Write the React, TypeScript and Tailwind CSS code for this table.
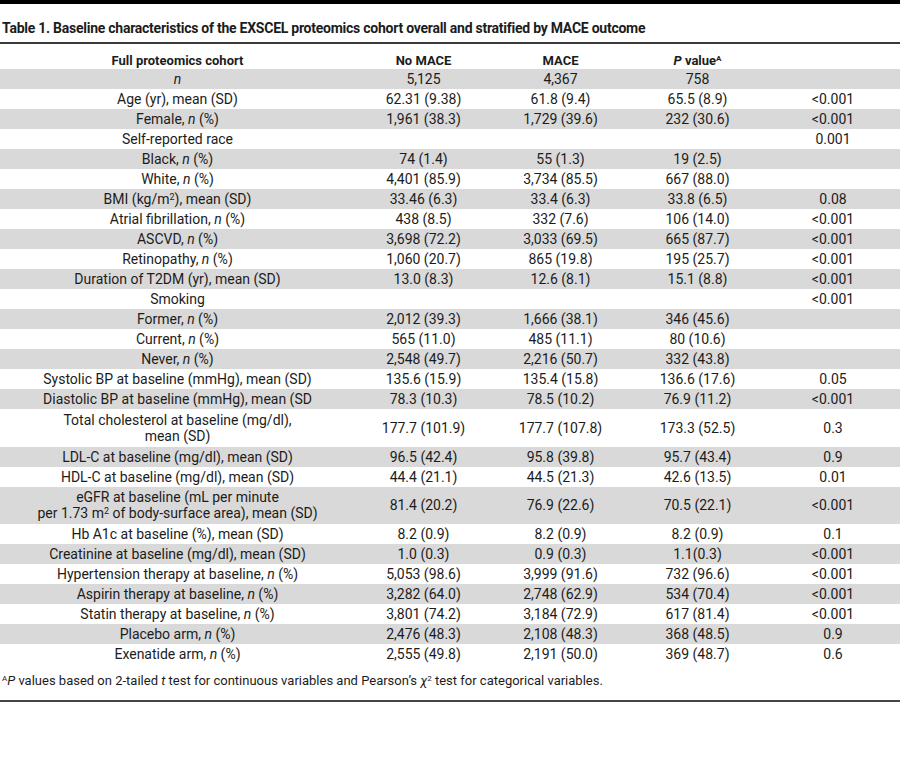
import React from "react";

type Row = {
  label: React.ReactNode;
  noMace: string;
  mace: string;
  pv: string;
  last: string;
  tall?: boolean;
};

const N = () => <i>n</i>;

const rows: Row[] = [
  { label: <N />, noMace: "5,125", mace: "4,367", pv: "758", last: "" },
  { label: "Age (yr), mean (SD)", noMace: "62.31 (9.38)", mace: "61.8 (9.4)", pv: "65.5 (8.9)", last: "<0.001" },
  { label: <>Female, <N /> (%)</>, noMace: "1,961 (38.3)", mace: "1,729 (39.6)", pv: "232 (30.6)", last: "<0.001" },
  { label: "Self-reported race", noMace: "", mace: "", pv: "", last: "0.001" },
  { label: <>Black, <N /> (%)</>, noMace: "74 (1.4)", mace: "55 (1.3)", pv: "19 (2.5)", last: "" },
  { label: <>White, <N /> (%)</>, noMace: "4,401 (85.9)", mace: "3,734 (85.5)", pv: "667 (88.0)", last: "" },
  {
    label: <>BMI (kg/m<sup className="text-[9px]">2</sup>), mean (SD)</>,
    noMace: "33.46 (6.3)", mace: "33.4 (6.3)", pv: "33.8 (6.5)", last: "0.08",
  },
  { label: <>Atrial fibrillation, <N /> (%)</>, noMace: "438 (8.5)", mace: "332 (7.6)", pv: "106 (14.0)", last: "<0.001" },
  { label: <>ASCVD, <N /> (%)</>, noMace: "3,698 (72.2)", mace: "3,033 (69.5)", pv: "665 (87.7)", last: "<0.001" },
  { label: <>Retinopathy, <N /> (%)</>, noMace: "1,060 (20.7)", mace: "865 (19.8)", pv: "195 (25.7)", last: "<0.001" },
  { label: "Duration of T2DM (yr), mean (SD)", noMace: "13.0 (8.3)", mace: "12.6 (8.1)", pv: "15.1 (8.8)", last: "<0.001" },
  { label: "Smoking", noMace: "", mace: "", pv: "", last: "<0.001" },
  { label: <>Former, <N /> (%)</>, noMace: "2,012 (39.3)", mace: "1,666 (38.1)", pv: "346 (45.6)", last: "" },
  { label: <>Current, <N /> (%)</>, noMace: "565 (11.0)", mace: "485 (11.1)", pv: "80 (10.6)", last: "" },
  { label: <>Never, <N /> (%)</>, noMace: "2,548 (49.7)", mace: "2,216 (50.7)", pv: "332 (43.8)", last: "" },
  { label: "Systolic BP at baseline (mmHg), mean (SD)", noMace: "135.6 (15.9)", mace: "135.4 (15.8)", pv: "136.6 (17.6)", last: "0.05" },
  { label: "Diastolic BP at baseline (mmHg), mean (SD", noMace: "78.3 (10.3)", mace: "78.5 (10.2)", pv: "76.9 (11.2)", last: "<0.001" },
  {
    label: <>Total cholesterol at baseline (mg/dl),<br />mean (SD)</>,
    noMace: "177.7 (101.9)", mace: "177.7 (107.8)", pv: "173.3 (52.5)", last: "0.3", tall: true,
  },
  { label: "LDL-C at baseline (mg/dl), mean (SD)", noMace: "96.5 (42.4)", mace: "95.8 (39.8)", pv: "95.7 (43.4)", last: "0.9" },
  { label: "HDL-C at baseline (mg/dl), mean (SD)", noMace: "44.4 (21.1)", mace: "44.5 (21.3)", pv: "42.6 (13.5)", last: "0.01" },
  {
    label: (
      <>
        eGFR at baseline (mL per minute
        <br />
        per 1.73 m<sup className="text-[9px]">2</sup> of body-surface area), mean (SD)
      </>
    ),
    noMace: "81.4 (20.2)", mace: "76.9 (22.6)", pv: "70.5 (22.1)", last: "<0.001", tall: true,
  },
  { label: "Hb A1c at baseline (%), mean (SD)", noMace: "8.2 (0.9)", mace: "8.2 (0.9)", pv: "8.2 (0.9)", last: "0.1" },
  { label: "Creatinine at baseline (mg/dl), mean (SD)", noMace: "1.0 (0.3)", mace: "0.9 (0.3)", pv: "1.1(0.3)", last: "<0.001" },
  { label: <>Hypertension therapy at baseline, <N /> (%)</>, noMace: "5,053 (98.6)", mace: "3,999 (91.6)", pv: "732 (96.6)", last: "<0.001" },
  { label: <>Aspirin therapy at baseline, <N /> (%)</>, noMace: "3,282 (64.0)", mace: "2,748 (62.9)", pv: "534 (70.4)", last: "<0.001" },
  { label: <>Statin therapy at baseline, <N /> (%)</>, noMace: "3,801 (74.2)", mace: "3,184 (72.9)", pv: "617 (81.4)", last: "<0.001" },
  { label: <>Placebo arm, <N /> (%)</>, noMace: "2,476 (48.3)", mace: "2,108 (48.3)", pv: "368 (48.5)", last: "0.9" },
  { label: <>Exenatide arm, <N /> (%)</>, noMace: "2,555 (49.8)", mace: "2,191 (50.0)", pv: "369 (48.7)", last: "0.6" },
];

const cols = "grid grid-cols-[355px_137px_137px_137px_1fr] text-center";

export default function App() {
  return (
    <div className="w-[900px] h-[758px] bg-white text-[#1c1c1c] font-['Roboto',sans-serif]">
      <div className="h-1 bg-black" />
      <h1 className="pl-[2px] pt-[14px] pb-[4px] text-[14px] leading-[20px] font-bold tracking-[-0.25px]">
        Table 1. Baseline characteristics of the EXSCEL proteomics cohort overall and stratified by MACE outcome
      </h1>
      <div className="border-t-2 border-[#3a3a3a]" />
      <div className={`${cols} h-[25px] pt-[7px] text-[13px] leading-[19px] font-bold`}>
        <div>Full proteomics cohort</div>
        <div>No MACE</div>
        <div>MACE</div>
        <div>
          <i>P</i> value<sup className="text-[8px]">A</sup>
        </div>
        <div />
      </div>
      <div className="text-[14px]">
        {rows.map((r, i) => (
          <div
            key={i}
            className={`${cols} items-center ${r.tall ? "h-[37.5px] leading-[16px]" : "h-5 leading-5"} ${
              i % 2 === 0 ? "bg-[#d9d9d9]" : ""
            }`}
          >
            <div>{r.label}</div>
            <div>{r.noMace}</div>
            <div>{r.mace}</div>
            <div>{r.pv}</div>
            <div>{r.last}</div>
          </div>
        ))}
      </div>
      <p className="pl-[2px] pt-[8px] pb-[10px] text-[13px] leading-[18px]">
        <sup className="text-[8px]">A</sup>
        <i>P</i> values based on 2-tailed <i>t</i> test for continuous variables and Pearson’s <i>χ</i>
        <sup className="text-[8px]">2</sup> test for categorical variables.
      </p>
      <div className="border-t-2 border-[#444]" />
    </div>
  );
}
